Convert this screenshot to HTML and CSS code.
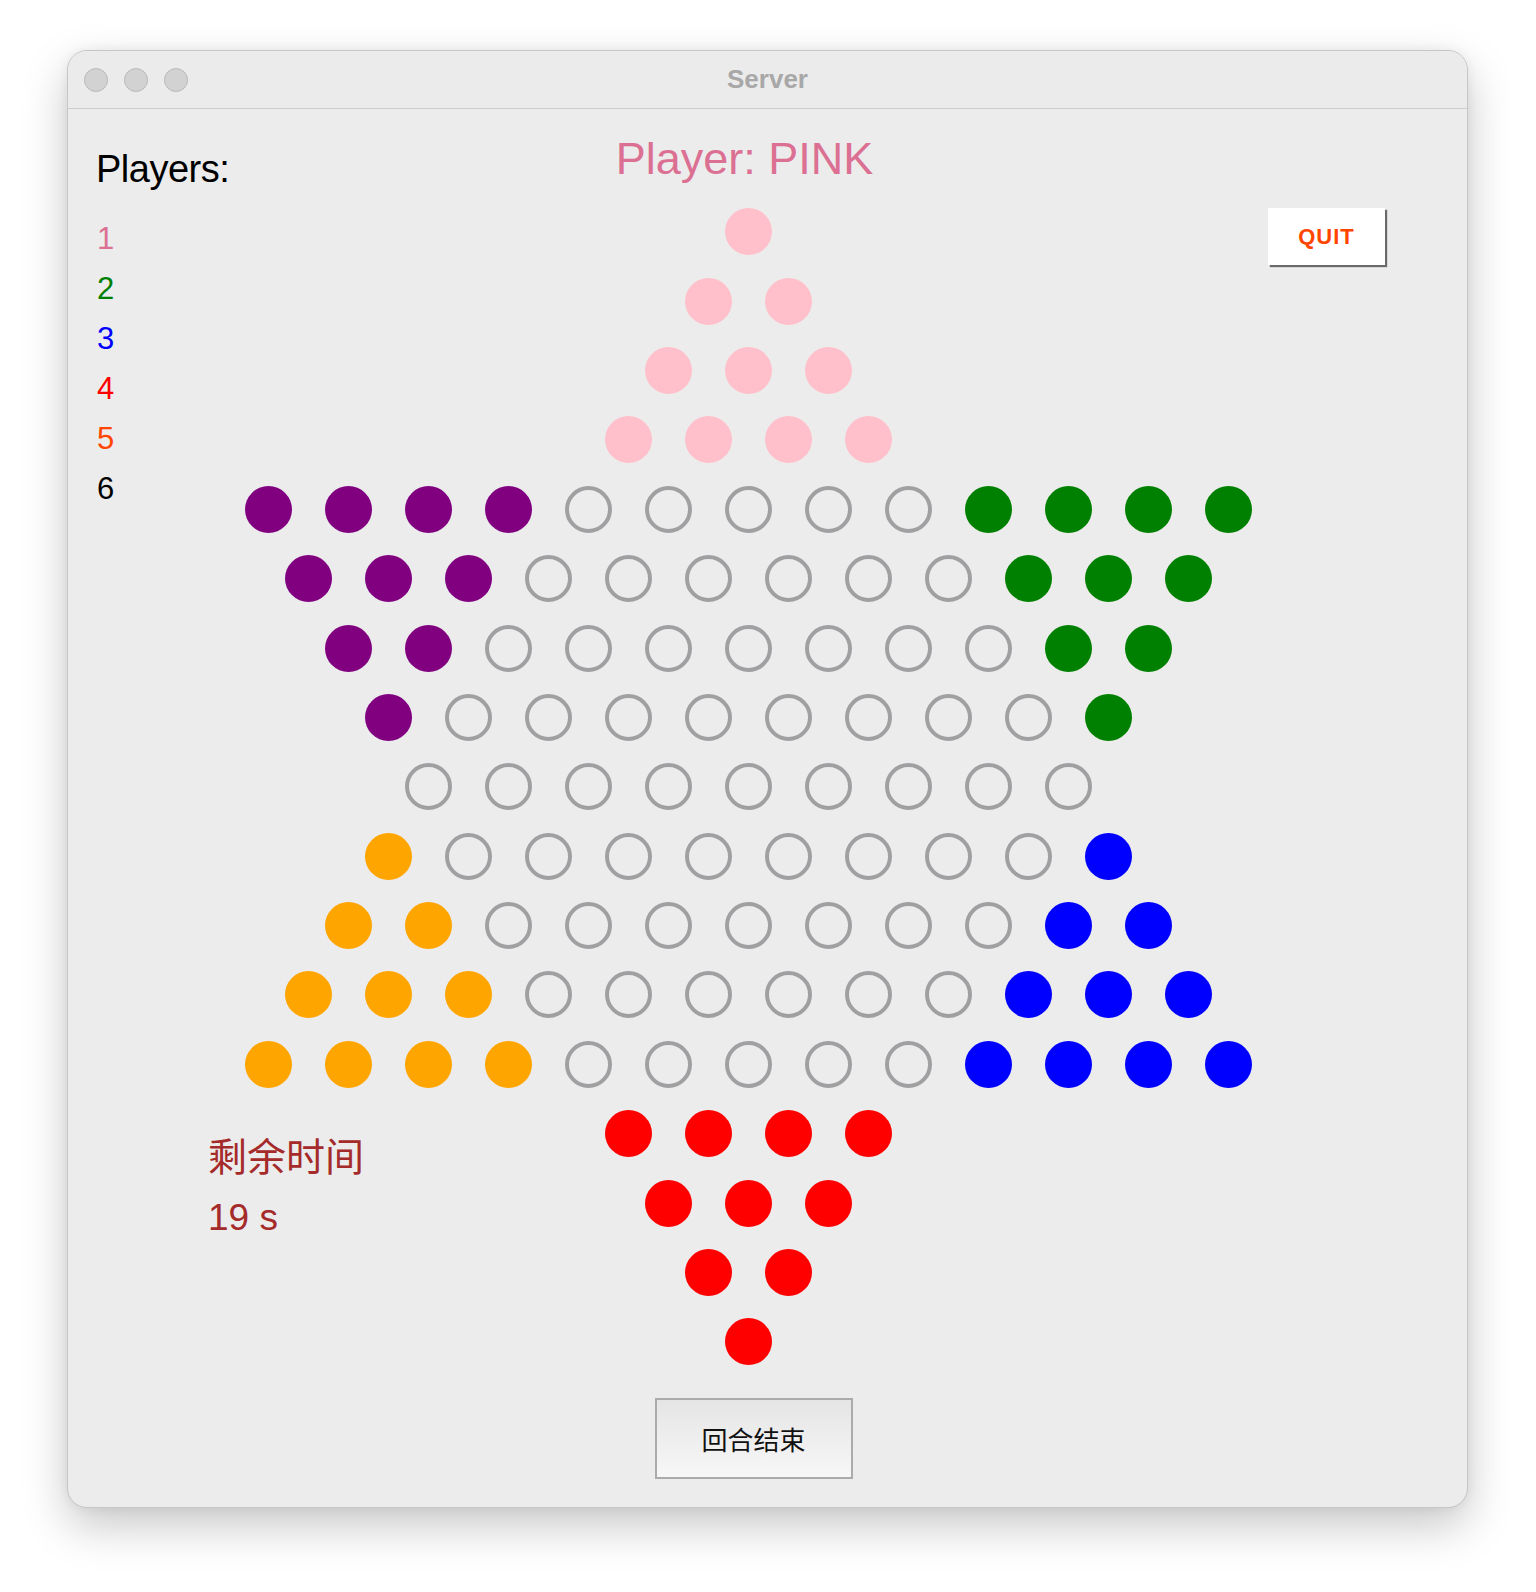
FILE: index.html
```html
<!DOCTYPE html>
<html lang="zh">
<head>
<meta charset="utf-8">
<title>Server</title>
<link rel="stylesheet" href="styles.css">
</head>
<body>
<div class="window">
  <div class="titlebar">
    <div class="lights"><span class="light"></span><span class="light"></span><span class="light"></span></div>
    <div class="wtitle">Server</div>
  </div>
  <div class="content">
    <div class="left">
      <div class="players-h">Players:</div>
      <ul class="plist">
        <li class="c1">1</li>
        <li class="c2">2</li>
        <li class="c3">3</li>
        <li class="c4">4</li>
        <li class="c5">5</li>
        <li class="c6">6</li>
      </ul>
      <div class="timer">
        <div class="t1">剩余时间</div>
        <div class="t2">19 s</div>
      </div>
    </div>
    <div class="center">
      <div class="turn">Player: PINK</div>
      <div class="board">
        <div class="row"><i class="p"></i></div>
        <div class="row"><i class="p"></i><i class="p"></i></div>
        <div class="row"><i class="p"></i><i class="p"></i><i class="p"></i></div>
        <div class="row"><i class="p"></i><i class="p"></i><i class="p"></i><i class="p"></i></div>
        <div class="row"><i class="u"></i><i class="u"></i><i class="u"></i><i class="u"></i><i class="e"></i><i class="e"></i><i class="e"></i><i class="e"></i><i class="e"></i><i class="g"></i><i class="g"></i><i class="g"></i><i class="g"></i></div>
        <div class="row"><i class="u"></i><i class="u"></i><i class="u"></i><i class="e"></i><i class="e"></i><i class="e"></i><i class="e"></i><i class="e"></i><i class="e"></i><i class="g"></i><i class="g"></i><i class="g"></i></div>
        <div class="row"><i class="u"></i><i class="u"></i><i class="e"></i><i class="e"></i><i class="e"></i><i class="e"></i><i class="e"></i><i class="e"></i><i class="e"></i><i class="g"></i><i class="g"></i></div>
        <div class="row"><i class="u"></i><i class="e"></i><i class="e"></i><i class="e"></i><i class="e"></i><i class="e"></i><i class="e"></i><i class="e"></i><i class="e"></i><i class="g"></i></div>
        <div class="row"><i class="e"></i><i class="e"></i><i class="e"></i><i class="e"></i><i class="e"></i><i class="e"></i><i class="e"></i><i class="e"></i><i class="e"></i></div>
        <div class="row"><i class="o"></i><i class="e"></i><i class="e"></i><i class="e"></i><i class="e"></i><i class="e"></i><i class="e"></i><i class="e"></i><i class="e"></i><i class="b"></i></div>
        <div class="row"><i class="o"></i><i class="o"></i><i class="e"></i><i class="e"></i><i class="e"></i><i class="e"></i><i class="e"></i><i class="e"></i><i class="e"></i><i class="b"></i><i class="b"></i></div>
        <div class="row"><i class="o"></i><i class="o"></i><i class="o"></i><i class="e"></i><i class="e"></i><i class="e"></i><i class="e"></i><i class="e"></i><i class="e"></i><i class="b"></i><i class="b"></i><i class="b"></i></div>
        <div class="row"><i class="o"></i><i class="o"></i><i class="o"></i><i class="o"></i><i class="e"></i><i class="e"></i><i class="e"></i><i class="e"></i><i class="e"></i><i class="b"></i><i class="b"></i><i class="b"></i><i class="b"></i></div>
        <div class="row"><i class="r"></i><i class="r"></i><i class="r"></i><i class="r"></i></div>
        <div class="row"><i class="r"></i><i class="r"></i><i class="r"></i></div>
        <div class="row"><i class="r"></i><i class="r"></i></div>
        <div class="row"><i class="r"></i></div>
      </div>
      <button class="endturn">回合结束</button>
    </div>
    <div class="right">
      <button class="quit">QUIT</button>
    </div>
  </div>
</div>
</body>
</html>
```
FILE: styles.css
```css
html, body {
  margin: 0;
  padding: 0;
  background: #ffffff;
}
body {
  width: 1536px;
  height: 1592px;
  overflow: hidden;
  font-family: "Liberation Sans", "Noto Sans CJK SC", sans-serif;
}
.window {
  margin: 50px 0 0 67px;
  width: 1401px;
  height: 1458px;
  box-sizing: border-box;
  border: 1px solid #c6c6c6;
  border-radius: 20px;
  background: #ececec;
  box-shadow: 0 18px 45px rgba(0, 0, 0, 0.22), 0 0 12px rgba(0, 0, 0, 0.06);
  overflow: hidden;
}
.titlebar {
  height: 57px;
  border-bottom: 1px solid #cdcdcd;
  display: flex;
  align-items: center;
  position: relative;
  background: #ebebeb;
}
.lights {
  display: flex;
  gap: 16px;
  padding-left: 16px;
  margin-top: 1px;
}
.light {
  width: 24px;
  height: 24px;
  box-sizing: border-box;
  border-radius: 50%;
  background: #d2d2d2;
  border: 1px solid #b9b9b9;
}
.wtitle {
  position: absolute;
  left: 0;
  right: 0;
  top: 0;
  height: 57px;
  line-height: 57px;
  text-align: center;
  font-weight: bold;
  font-size: 26px;
  color: #a8a8a8;
  pointer-events: none;
}
.content {
  display: grid;
  grid-template-columns: 169px 1022px 1fr;
  height: 1399px;
}
.left {
  padding-left: 28px;
  padding-top: 39px;
  white-space: nowrap;
}
.players-h {
  font-size: 38px;
  line-height: 43px;
  color: #000;
  letter-spacing: -0.5px;
}
.plist {
  list-style: none;
  margin: 23px 0 0 1px;
  padding: 0;
}
.plist li {
  font-size: 31px;
  line-height: 50px;
  height: 50px;
}
.c1 { color: #db7093; }
.c2 { color: #008000; }
.c3 { color: #0000ff; }
.c4 { color: #ff0000; }
.c5 { color: #ff4500; }
.c6 { color: #000000; }
.timer {
  margin-top: 614px;
  margin-left: 112px;
  color: #a52a2a;
}
.t1 {
  font-size: 39px;
  line-height: 60px;
}
.t2 {
  font-size: 37px;
  line-height: 60px;
}
.center {
  display: flex;
  flex-direction: column;
  align-items: center;
}
.turn {
  margin-top: 24px;
  margin-right: 7px;
  font-size: 45px;
  line-height: 52px;
  color: #db7093;
  white-space: nowrap;
}
.board {
  margin-top: 12px;
  display: flex;
  flex-direction: column;
  align-self: stretch;
}
.row {
  height: 69.4px;
  display: flex;
  justify-content: center;
  align-items: center;
  gap: 33px;
}
.row i {
  display: block;
  width: 47px;
  height: 47px;
  border-radius: 50%;
  box-sizing: border-box;
  flex: none;
}
.p { background: #ffc0cb; }
.u { background: #800080; }
.g { background: #008000; }
.b { background: #0000ff; }
.r { background: #ff0000; }
.o { background: #ffa500; }
.e { border: 4.5px solid #a0a0a2; background: transparent; }
.endturn {
  margin-top: 21px;
  margin-left: 11px;
  width: 198px;
  height: 81px;
  box-sizing: border-box;
  border: 2px solid #ababab;
  border-radius: 0;
  background: linear-gradient(#e5e5e5, #f7f7f7);
  font-family: "Liberation Sans", "Noto Sans CJK SC", sans-serif;
  font-size: 26px;
  color: #111;
  padding: 0;
}
.right {
  padding-top: 99px;
  padding-left: 9px;
}
.quit {
  width: 117px;
  height: 57px;
  border: none;
  border-radius: 0;
  background: #ffffff;
  box-shadow: 2px 2px 1px rgba(0, 0, 0, 0.55);
  font-family: "Liberation Sans", sans-serif;
  font-weight: bold;
  font-size: 22px;
  letter-spacing: 1px;
  color: #ff4500;
  padding: 0;
}
```
